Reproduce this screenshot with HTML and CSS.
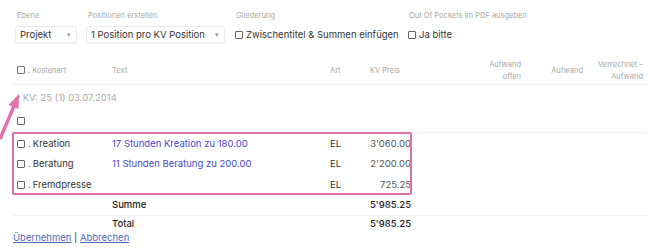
FILE: index.html
```html
<!DOCTYPE html>
<html lang="de">
<head>
    <meta charset="UTF-8">
    <meta name="viewport" content="width=device-width, initial-scale=1.0">
    <title>Positionen</title>
    <link rel="stylesheet" href="styles.css">
</head>
<body>
    <div class="filters">
        <div class="field f-ebene">
            <label>Ebene</label>
            <div class="select s-ebene">Projekt <span class="caret">&#9662;</span></div>
        </div>
        <div class="field f-pos">
            <label>Positionen erstellen</label>
            <div class="select s-pos">1 Position pro KV Position <span class="caret">&#9662;</span></div>
        </div>
        <div class="field f-glied">
            <label>Gliederung</label>
            <div class="check"><span class="box"></span>Zwischentitel &amp; Summen einfügen</div>
        </div>
        <div class="field">
            <label>Out Of Pockets im PDF ausgeben</label>
            <div class="check"><span class="box"></span>Ja bitte</div>
        </div>
    </div>

    <div class="wrap">
        <table class="positions">
            <colgroup>
                <col style="width:95px"><col style="width:218px"><col style="width:40px"><col style="width:49px">
                <col style="width:110px"><col style="width:62px"><col style="width:60px">
            </colgroup>
            <thead>
                <tr>
                    <th><span class="box"></span><span class="dot">.</span>Kostenart</th>
                    <th>Text</th>
                    <th>Art</th>
                    <th>KV Preis</th>
                    <th class="num">Aufwand<br>offen</th>
                    <th class="num">Aufwand</th>
                    <th class="num">Verrechnet –<br>Aufwand</th>
                </tr>
            </thead>
            <tbody>
                <tr class="group">
                    <td colspan="7"><span class="tri">&#9662;</span> KV: 25 (1) 03.07.2014</td>
                </tr>
                <tr class="groupcheck">
                    <td colspan="7"><span class="box"></span></td>
                </tr>
                <tr class="item">
                    <td><span class="box"></span><span class="dot">.</span>Kreation</td>
                    <td><a href="#">17 Stunden Kreation zu 180.00</a></td>
                    <td>EL</td>
                    <td class="num">3'060.00</td>
                    <td></td><td></td><td></td>
                </tr>
                <tr class="item">
                    <td><span class="box"></span><span class="dot">.</span>Beratung</td>
                    <td><a href="#">11 Stunden Beratung zu 200.00</a></td>
                    <td>EL</td>
                    <td class="num">2'200.00</td>
                    <td></td><td></td><td></td>
                </tr>
                <tr class="item">
                    <td><span class="box"></span><span class="dot">.</span>Fremdpresse</td>
                    <td></td>
                    <td>EL</td>
                    <td class="num">725.25</td>
                    <td></td><td></td><td></td>
                </tr>
                <tr class="sum">
                    <td></td>
                    <td>Summe</td>
                    <td></td>
                    <td class="num">5'985.25</td>
                    <td></td><td></td><td></td>
                </tr>
                <tr class="total">
                    <td></td>
                    <td>Total</td>
                    <td></td>
                    <td class="num">5'985.25</td>
                    <td></td><td></td><td></td>
                </tr>
            </tbody>
        </table>

        <div class="highlight"></div>
        <svg class="arrow" width="30" height="56" viewBox="0 0 30 56">
            <line x1="0" y1="55" x2="14" y2="22" stroke="#e171ad" stroke-width="3.5"/>
            <polygon points="19,10 18.5,25 8.5,21" fill="#e171ad"/>
        </svg>
    </div>

    <div class="actions">
        <a href="#">Übernehmen</a> | <a href="#">Abbrechen</a>
    </div>
</body>
</html>
```

FILE: styles.css
```css
body{
    margin:0px;
    background-color:#fff;
    font-family:Inter, "Open Sans", sans-serif;
    font-size:9.5px;
    color:#333;
}
.filters{
    display:flex;
    padding:11px 0 0 15px;
    height:46px;
}
.field label{
    display:block;
    font-size:7.5px;
    color:#a8a8a8;
    margin:0 0 5px 2px;
    height:10px;
}
.f-ebene{ width:71px; }
.f-pos{ width:148px; }
.f-glied{ width:173px; }
.select{
    box-sizing:border-box;
    height:17px;
    line-height:15px;
    border:1px solid #ececec;
    border-radius:2px;
    box-shadow:0 1px 1px rgba(0,0,0,0.05);
    padding:0 4px;
    position:relative;
    color:#333;
}
.s-ebene{ width:62px; }
.s-pos{ width:139px; }
.caret{
    position:absolute;
    right:5px;
    top:0;
    font-size:7px;
    color:#999;
}
.check{
    height:17px;
    line-height:17px;
    color:#333;
}
.box{
    display:inline-block;
    box-sizing:border-box;
    width:8px;
    height:8px;
    border:1px solid #666;
    border-radius:1px;
    vertical-align:-1px;
    margin-right:3px;
}
.check .box{ margin-left:1px; }
.wrap{
    position:relative;
    padding:0 13px;
}
.positions{
    width:634px;
    table-layout:fixed;
    border-collapse:collapse;
}
.positions th{
    font-weight:normal;
    font-size:7.5px;
    color:#a8a8a8;
    text-align:left;
    padding:0 4px;
    height:27px;
    line-height:12px;
    border-bottom:1px solid #eee;
}
.positions th .box{ border-color:#777; }
.positions td{
    padding:0 4px;
    white-space:nowrap;
}
.positions .num{ text-align:right; }
.dot{ color:#777; margin-right:2px; }
.group td{
    height:22px;
    color:#aaa;
    padding-top:1px;
}
.tri{ font-size:6px; color:#999; vertical-align:2px; }
.groupcheck td{
    height:24px;
    border-bottom:1px solid #f0f0f0;
}
.item td{ height:20.5px; }
.item .num{ color:#555; }
.item a{
    color:#4848c8;
    text-decoration:none;
}
.sum td, .total td{
    height:20px;
    font-weight:500;
    color:#222;
}
.sum td{ border-bottom:1px solid #f0f0f0; }
.total td{ height:16px; }
.highlight{
    position:absolute;
    left:12px;
    top:75px;
    width:396px;
    height:59px;
    border:2px solid #dd72a9;
    border-radius:2px;
}
.arrow{
    position:absolute;
    left:0;
    top:27px;
}
.actions{
    padding:0 0 0 13px;
    color:#333;
}
.actions a{
    color:#4a6cb8;
}
```
